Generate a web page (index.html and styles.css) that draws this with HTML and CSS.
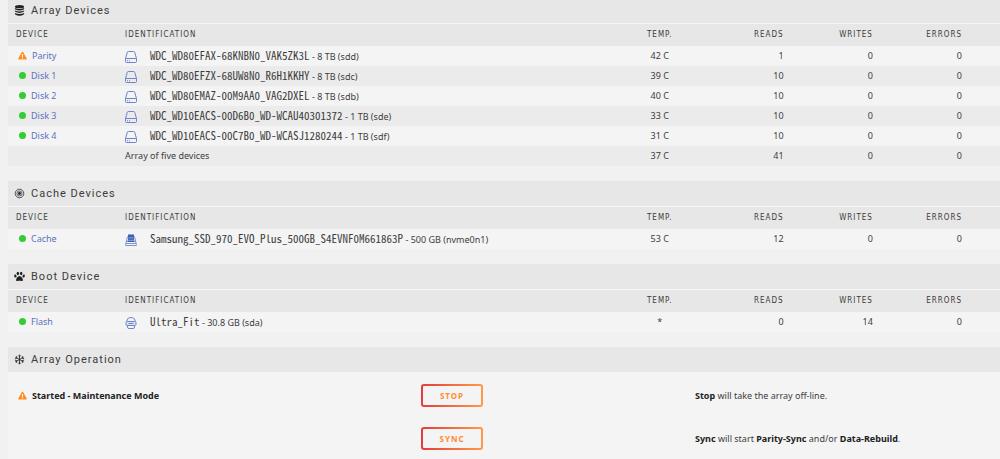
FILE: index.html
```html
<!DOCTYPE html>
<html lang="en">
<head>
<meta charset="utf-8">
<title>Array Devices</title>
<link rel="stylesheet" href="styles.css">
</head>
<body>
<svg class="defs" aria-hidden="true">
  <symbol id="warn" viewBox="0 0 16 16"><path fill="#ff8c1a" d="M8 1.2c.5 0 .9.3 1.1.7l6.3 11.3c.5.9-.1 1.8-1.1 1.8H1.7c-1 0-1.600-.9-1.100-1.800L6.900 1.900c.2-.4.6-.7 1.100-.7z"/><path fill="#fff" d="M6.900 5.500h2.200l-.3 5H7.200zM7 11.500h2v2H7z"/></symbol>
  <symbol id="disk" viewBox="0 0 12 12"><g fill="none" stroke="#6f83c9" stroke-width="1"><path d="M.5 7.500 2.300 1.300Q2.500.5 3.300.5h5.400q.8 0 1 .8l1.800 6.200v3q0 1-1 1h-9q-1 0-1-1zM.5 7.500h11"/><path d="M2 9.700h1M4 9.700h1"/></g></symbol>
  <symbol id="nvme" viewBox="0 0 12 12"><path fill="none" stroke="#8193cf" d="M2.500 2.500.6 10.500v1h10.800v-1L9.500 2.500M1 9.500h10"/><path fill="#3f5fb4" d="M3 .5h6V6l1 2H2l1-2z"/><path stroke="#b5c1e5" stroke-width=".7" d="M3.500 3.800h5M3 6.300h6"/></symbol>
  <symbol id="flash" viewBox="0 0 12 12"><g fill="none" stroke="#6f83c9" stroke-width="1"><path d="M2 4.500V3Q2.500.5 6 .5T10 3v1.500M2.500 8.500V10q0 1.500 1.500 1.500h4q1.500 0 1.500-1.500V8.500"/><rect x="1" y="4.500" width="10" height="4" rx="1.200" fill="#dce3f5"/><path d="M3.500 6.500h5"/></g></symbol>
</svg>
<main>
  <section class="panel">
    <h2 class="title"><svg class="title-icon" viewBox="0 0 12 12"><g fill="#222"><ellipse cx="6" cy="1.800" rx="5" ry="1.700"/><path d="M1 3.200q5 2.200 10 0v1.300q-5 3-10 0zM1 5.900q5 2.200 10 0v1.300q-5 3-10 0zM1 8.600q5 2.200 10 0v1.400q-5 3.400-10 0z"/></g></svg>Array Devices</h2>
    <table class="devices">
      <thead><tr><th class="device">Device</th><th class="ident">Identification</th><th class="temp">Temp.</th><th class="reads">Reads</th><th class="writes">Writes</th><th class="errors">Errors</th></tr></thead>
      <tbody>
        <tr><td><svg class="warn"><use href="#warn"/></svg><a href="#parity">Parity</a></td><td><svg class="drive"><use href="#disk"/></svg><span class="serial">WDC_WD80EFAX-68KNBN0_VAK5ZK3L</span> - 8 TB (sdd)</td><td>42 C</td><td>1</td><td>0</td><td>0</td></tr>
        <tr><td><span class="dot"></span><a href="#disk1">Disk 1</a></td><td><svg class="drive"><use href="#disk"/></svg><span class="serial">WDC_WD80EFZX-68UW8N0_R6H1KKHY</span> - 8 TB (sdc)</td><td>39 C</td><td>10</td><td>0</td><td>0</td></tr>
        <tr><td><span class="dot"></span><a href="#disk2">Disk 2</a></td><td><svg class="drive"><use href="#disk"/></svg><span class="serial">WDC_WD80EMAZ-00M9AA0_VAG2DXEL</span> - 8 TB (sdb)</td><td>40 C</td><td>10</td><td>0</td><td>0</td></tr>
        <tr><td><span class="dot"></span><a href="#disk3">Disk 3</a></td><td><svg class="drive"><use href="#disk"/></svg><span class="serial">WDC_WD10EACS-00D6B0_WD-WCAU40301372</span> - 1 TB (sde)</td><td>33 C</td><td>10</td><td>0</td><td>0</td></tr>
        <tr><td><span class="dot"></span><a href="#disk4">Disk 4</a></td><td><svg class="drive"><use href="#disk"/></svg><span class="serial">WDC_WD10EACS-00C7B0_WD-WCASJ1280244</span> - 1 TB (sdf)</td><td>31 C</td><td>10</td><td>0</td><td>0</td></tr>
        <tr><td></td><td>Array of five devices</td><td>37 C</td><td>41</td><td>0</td><td>0</td></tr>
      </tbody>
    </table>
  </section>
  <section class="panel">
    <h2 class="title"><svg class="title-icon" viewBox="0 0 12 12"><circle cx="6" cy="6" r="4.700" fill="none" stroke="#444"/><circle cx="6" cy="6" r="2.800" fill="none" stroke="#444" stroke-width=".9"/><circle cx="6" cy="6" r="1.600" fill="#222"/></svg>Cache Devices</h2>
    <table class="devices">
      <thead><tr><th class="device">Device</th><th class="ident">Identification</th><th class="temp">Temp.</th><th class="reads">Reads</th><th class="writes">Writes</th><th class="errors">Errors</th></tr></thead>
      <tbody><tr><td><span class="dot"></span><a href="#cache">Cache</a></td><td><svg class="drive"><use href="#nvme"/></svg><span class="serial">Samsung_SSD_970_EVO_Plus_500GB_S4EVNF0M661863P</span> - 500 GB (nvme0n1)</td><td>53 C</td><td>12</td><td>0</td><td>0</td></tr></tbody>
    </table>
  </section>
  <section class="panel">
    <h2 class="title"><svg class="title-icon" viewBox="0 0 12 12"><g fill="#222"><ellipse cx="4.200" cy="2.800" rx="1.300" ry="1.900"/><ellipse cx="7.800" cy="2.800" rx="1.300" ry="1.900"/><ellipse cx="1.500" cy="5.500" rx="1.200" ry="1.700" transform="rotate(-20 1.500 5.500)"/><ellipse cx="10.500" cy="5.500" rx="1.200" ry="1.700" transform="rotate(20 10.500 5.500)"/><path d="M6 5.500c1.600 0 3.700 2.500 3.700 4.200 0 1.900-2.200 1-3.700 1s-3.700.9-3.700-1C2.300 8 4.400 5.500 6 5.500z"/></g></svg>Boot Device</h2>
    <table class="devices">
      <thead><tr><th class="device">Device</th><th class="ident">Identification</th><th class="temp">Temp.</th><th class="reads">Reads</th><th class="writes">Writes</th><th class="errors">Errors</th></tr></thead>
      <tbody><tr><td><span class="dot"></span><a href="#flash-device">Flash</a></td><td><svg class="drive"><use href="#flash"/></svg><span class="serial">Ultra_Fit</span> - 30.8 GB (sda)</td><td>*</td><td>0</td><td>14</td><td>0</td></tr></tbody>
    </table>
  </section>
  <section class="panel">
    <h2 class="title"><svg class="title-icon" viewBox="0 0 12 12"><path fill="none" stroke="#222" stroke-width=".9" d="M6 .7v10.600M1.400 3.350l9.200 5.300M1.400 8.650l9.200-5.300M4.500 1.500 6 3l1.500-1.500M4.500 10.500 6 9l1.500 1.500M1 5.300l2.200-.7-.5-2.200M11 6.700l-2.200.7.5 2.200M1 6.700l2.200.7-.5 2.200M11 5.300l-2.200-.7.5-2.200"/></svg>Array Operation</h2>
    <div class="operation">
      <strong class="state"><svg class="warn"><use href="#warn"/></svg>Started - Maintenance Mode</strong>
      <button type="button">Stop</button>
      <p><strong>Stop</strong> will take the array off-line.</p>
      <button type="button" class="sync">Sync</button>
      <p><strong>Sync</strong> will start <strong>Parity-Sync</strong> and/or <strong>Data-Rebuild</strong>.</p>
    </div>
  </section>
</main>
</body>
</html>
```
FILE: styles.css
```css
* { box-sizing: border-box; }
body {
  margin: 0;
  background: #f1f1f1;
  color: #3c3c3c;
  font: 9px/18px "Noto Sans", sans-serif;
}
.defs { position: absolute; width: 0; height: 0; }
main {
  display: flex;
  flex-direction: column;
  gap: 15px;
  margin: -2px 0 0 8px;
}
.title {
  display: flex;
  align-items: center;
  gap: 6px;
  height: 25px;
  margin: 0;
  padding: 0 6px;
  background: #e7e7e7;
  font: 11px/20px Roboto, sans-serif;
  letter-spacing: 1px;
}
.title-icon { width: 11px; height: 11px; }
.devices {
  width: 100%;
  table-layout: fixed;
  border-spacing: 0;
  border-top: 1px solid #f5f5f5;
}
th, td { padding: 0 8px; height: 20px; text-align: right; white-space: nowrap; }
td { line-height: 16px; }
th {
  height: 22px;
  background: #e7e7e7;
  font: 8px/16px "DejaVu Sans Condensed", "DejaVu Sans", sans-serif;
  letter-spacing: 1px;
  text-transform: uppercase;
}
.device { width: 11%; }
.ident { width: 51%; }
.temp { width: 7%; }
.reads { width: 10%; }
.writes { width: 9%; }
tr > :nth-child(1), tr > :nth-child(2) { text-align: left; }
tr > :nth-child(3) { padding: 0 4px 0 8px; text-align: center; }
tr > :last-child { padding-right: 38px; }
tbody tr { background: #f4f4f4; }
tbody tr:nth-child(even) { background: #ebebeb; }
a { color: #5a72bd; text-decoration: none; }
.dot {
  display: inline-block;
  width: 7px;
  height: 7px;
  margin: 0 5px 0 3px;
  border-radius: 50%;
  background: #33cc33;
}
.warn { width: 9px; height: 9px; margin: 0 5px 0 2px; vertical-align: -1px; }
.drive { width: 12px; height: 12px; margin-right: 13px; vertical-align: -3px; }
.serial { font: 11px/14px "Noto Sans Mono CJK SC", "DejaVu Sans Mono", monospace; }
.operation {
  display: grid;
  grid-template-columns: 413fr 274fr 305fr;
  align-items: center;
  row-gap: 20px;
  padding: 12px 0 9px;
  background: #f4f4f4;
}
.operation p { margin: 0; }
.operation strong { color: #222; }
.state { padding-left: 8px; }
.sync { grid-column: 2; }
button {
  justify-self: start;
  min-width: 62px;
  height: 23px;
  padding: 0 12px;
  border: 2px solid transparent;
  border-radius: 3px;
  background:
    linear-gradient(#f4f4f4, #f4f4f4) padding-box,
    linear-gradient(90deg, #e23c3c, #ff9a4a) border-box;
  color: #ff8c2f;
  font: bold 8px/18px "Noto Sans", sans-serif;
  letter-spacing: 1px;
  text-transform: uppercase;
}
```
